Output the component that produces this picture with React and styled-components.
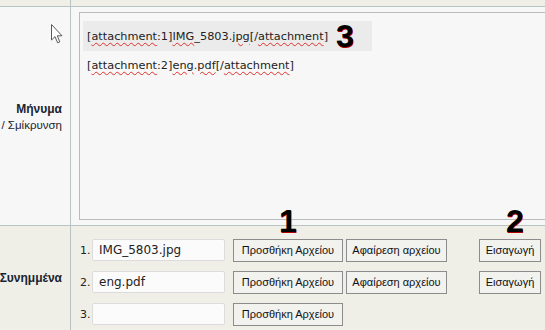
import styled, { createGlobalStyle } from "styled-components";

const GlobalStyle = createGlobalStyle`
  body {
    margin: 0;
    background: #efeee7;
    font-family: "DejaVu Sans", Verdana, sans-serif;
  }
`;

const attachments = [
  { name: "IMG_5803.jpg", full: true },
  { name: "eng.pdf", full: true },
  { name: "", full: false },
];

const App = () => {
  return (
    <>
      <GlobalStyle />
      <Page>
        <Row $bg="#efeee7" $h="6px">
          <LabelCell />
          <div />
        </Row>
        <Row $bg="#f7f7f7" $line>
          <LabelCell>
            <MessageLabel>
              <Strong>Μήνυμα</Strong>
              <Small>/ Σμίκρυνση</Small>
            </MessageLabel>
          </LabelCell>
          <EditorCell>
            <Editor>
              <Highlight>
                <Code>
                  [<Wavy>attachment</Wavy>:1]<Wavy>IMG</Wavy>_5803.<Wavy>jpg</Wavy>[/<Wavy>attachment</Wavy>]
                </Code>
                <Mark $inline>3</Mark>
              </Highlight>
              <Line>
                <Code>
                  [<Wavy>attachment</Wavy>:2]<Wavy>eng</Wavy>.<Wavy>pdf</Wavy>[/<Wavy>attachment</Wavy>]
                </Code>
              </Line>
            </Editor>
          </EditorCell>
        </Row>
        <Row $bg="#efeee7" $line $grow>
          <LabelCell>
            <AttachLabel>Συνημμένα</AttachLabel>
          </LabelCell>
          <AttachList>
            {attachments.map((a, i) => (
              <AttachRow key={i}>
                <Num>{i + 1}.</Num>
                <FileInput defaultValue={a.name} />
                <Button $w="110px">Προσθήκη Αρχείου</Button>
                {a.full && (
                  <>
                    <Button $w="101px" $ml="3px">Αφαίρεση αρχείου</Button>
                    <Button $w="62px" $ml="32px">Εισαγωγή</Button>
                  </>
                )}
              </AttachRow>
            ))}
          </AttachList>
        </Row>
        <Mark $x="279px" $y="205px">1</Mark>
        <Mark $x="506px" $y="205px">2</Mark>
        <Cursor viewBox="0 0 12 20" width="12" height="20">
          <path
            d="M0.5 0.5 L0.5 16 L4 12.6 L6.6 18.8 L8.8 17.9 L6.3 11.8 L11 11.8 Z"
            fill="#fff"
            stroke="#5a5a5a"
            strokeWidth="1"
            strokeLinejoin="round"
          />
        </Cursor>
      </Page>
    </>
  );
};

const Page = styled.div`
  position: relative;
  width: 545px;
  height: 330px;
  overflow: hidden;
  display: flex;
  flex-direction: column;
`;

const Row = styled.div`
  display: grid;
  grid-template-columns: 71px 1fr;
  background: ${(p) => p.$bg};
  height: ${(p) => p.$h || "auto"};
  border-top: ${(p) => (p.$line ? "1px solid #b8c3c3" : "none")};
  flex: ${(p) => (p.$grow ? 1 : "none")};
`;

const LabelCell = styled.div`
  box-sizing: border-box;
  border-right: 1px solid #b8c3c3;
  position: relative;
`;

const MessageLabel = styled.div`
  position: absolute;
  right: 8px;
  top: 94px;
  text-align: right;
  white-space: nowrap;
`;

const Strong = styled.div`
  font-family: "Liberation Sans", Arial, sans-serif;
  font-weight: bold;
  font-size: 12px;
  line-height: 16px;
  color: #1a2430;
`;

const Small = styled.div`
  font-family: "Liberation Sans", Arial, sans-serif;
  font-size: 11.5px;
  line-height: 16px;
  color: #1a2430;
`;

const AttachLabel = styled(Strong)`
  position: absolute;
  right: 8px;
  top: 44px;
  white-space: nowrap;
`;

const EditorCell = styled.div`
  padding: 5px 0 5px 8px;
  overflow: hidden;
`;

const Editor = styled.div`
  box-sizing: border-box;
  width: 490px;
  height: 208px;
  border: 1px solid #b8bcbc;
  background: #f7f7f7;
  padding: 8px 0 0 3px;
`;

const Highlight = styled.div`
  display: flex;
  align-items: center;
  width: 289px;
  height: 30px;
  background: #ebebeb;
  padding-left: 4px;
  box-sizing: border-box;
`;

const Line = styled.div`
  display: flex;
  align-items: center;
  height: 28px;
  padding-left: 4px;
`;

const Code = styled.span`
  font-family: "DejaVu Sans", Verdana, sans-serif;
  font-size: 11.3px;
  color: #222;
  white-space: nowrap;
`;

const Wavy = styled.span`
  text-decoration: underline wavy #e0302a;
  text-decoration-thickness: 1px;
  text-underline-offset: 2px;
`;

const Mark = styled.span`
  font-family: "Liberation Sans", Arial, sans-serif;
  font-weight: bold;
  font-size: 32px;
  line-height: 32px;
  color: #000;
  text-shadow: 0.6px 0.6px 0 #b00000;
  position: ${(p) => (p.$inline ? "static" : "absolute")};
  left: ${(p) => p.$x};
  top: ${(p) => p.$y};
  margin-left: ${(p) => (p.$inline ? "8px" : 0)};
`;

const AttachList = styled.div`
  display: flex;
  flex-direction: column;
  gap: 10px;
  padding: 13px 0 0 9px;
`;

const AttachRow = styled.div`
  display: flex;
  align-items: center;
  height: 22px;
`;

const Num = styled.span`
  width: 12px;
  font-family: "DejaVu Sans", Verdana, sans-serif;
  font-size: 11px;
  color: #222;
`;

const FileInput = styled.input`
  box-sizing: border-box;
  width: 133px;
  height: 22px;
  margin-right: 8px;
  border: 1px solid #dcdcdc;
  border-radius: 2px;
  background: #fbfbfb;
  padding: 0 6px;
  font-family: "DejaVu Sans", Verdana, sans-serif;
  font-size: 12px;
  color: #222;
  outline: none;
`;

const Button = styled.button`
  box-sizing: border-box;
  width: ${(p) => p.$w};
  height: 23px;
  margin-left: ${(p) => p.$ml || 0};
  padding: 0;
  border: 1px solid #8c8c8c;
  border-radius: 0;
  background: #f2f2ef;
  font-family: "Liberation Sans", Arial, sans-serif;
  font-size: 11px;
  color: #111;
  white-space: nowrap;
`;

const Cursor = styled.svg`
  position: absolute;
  left: 51px;
  top: 24px;
`;

export default App;
